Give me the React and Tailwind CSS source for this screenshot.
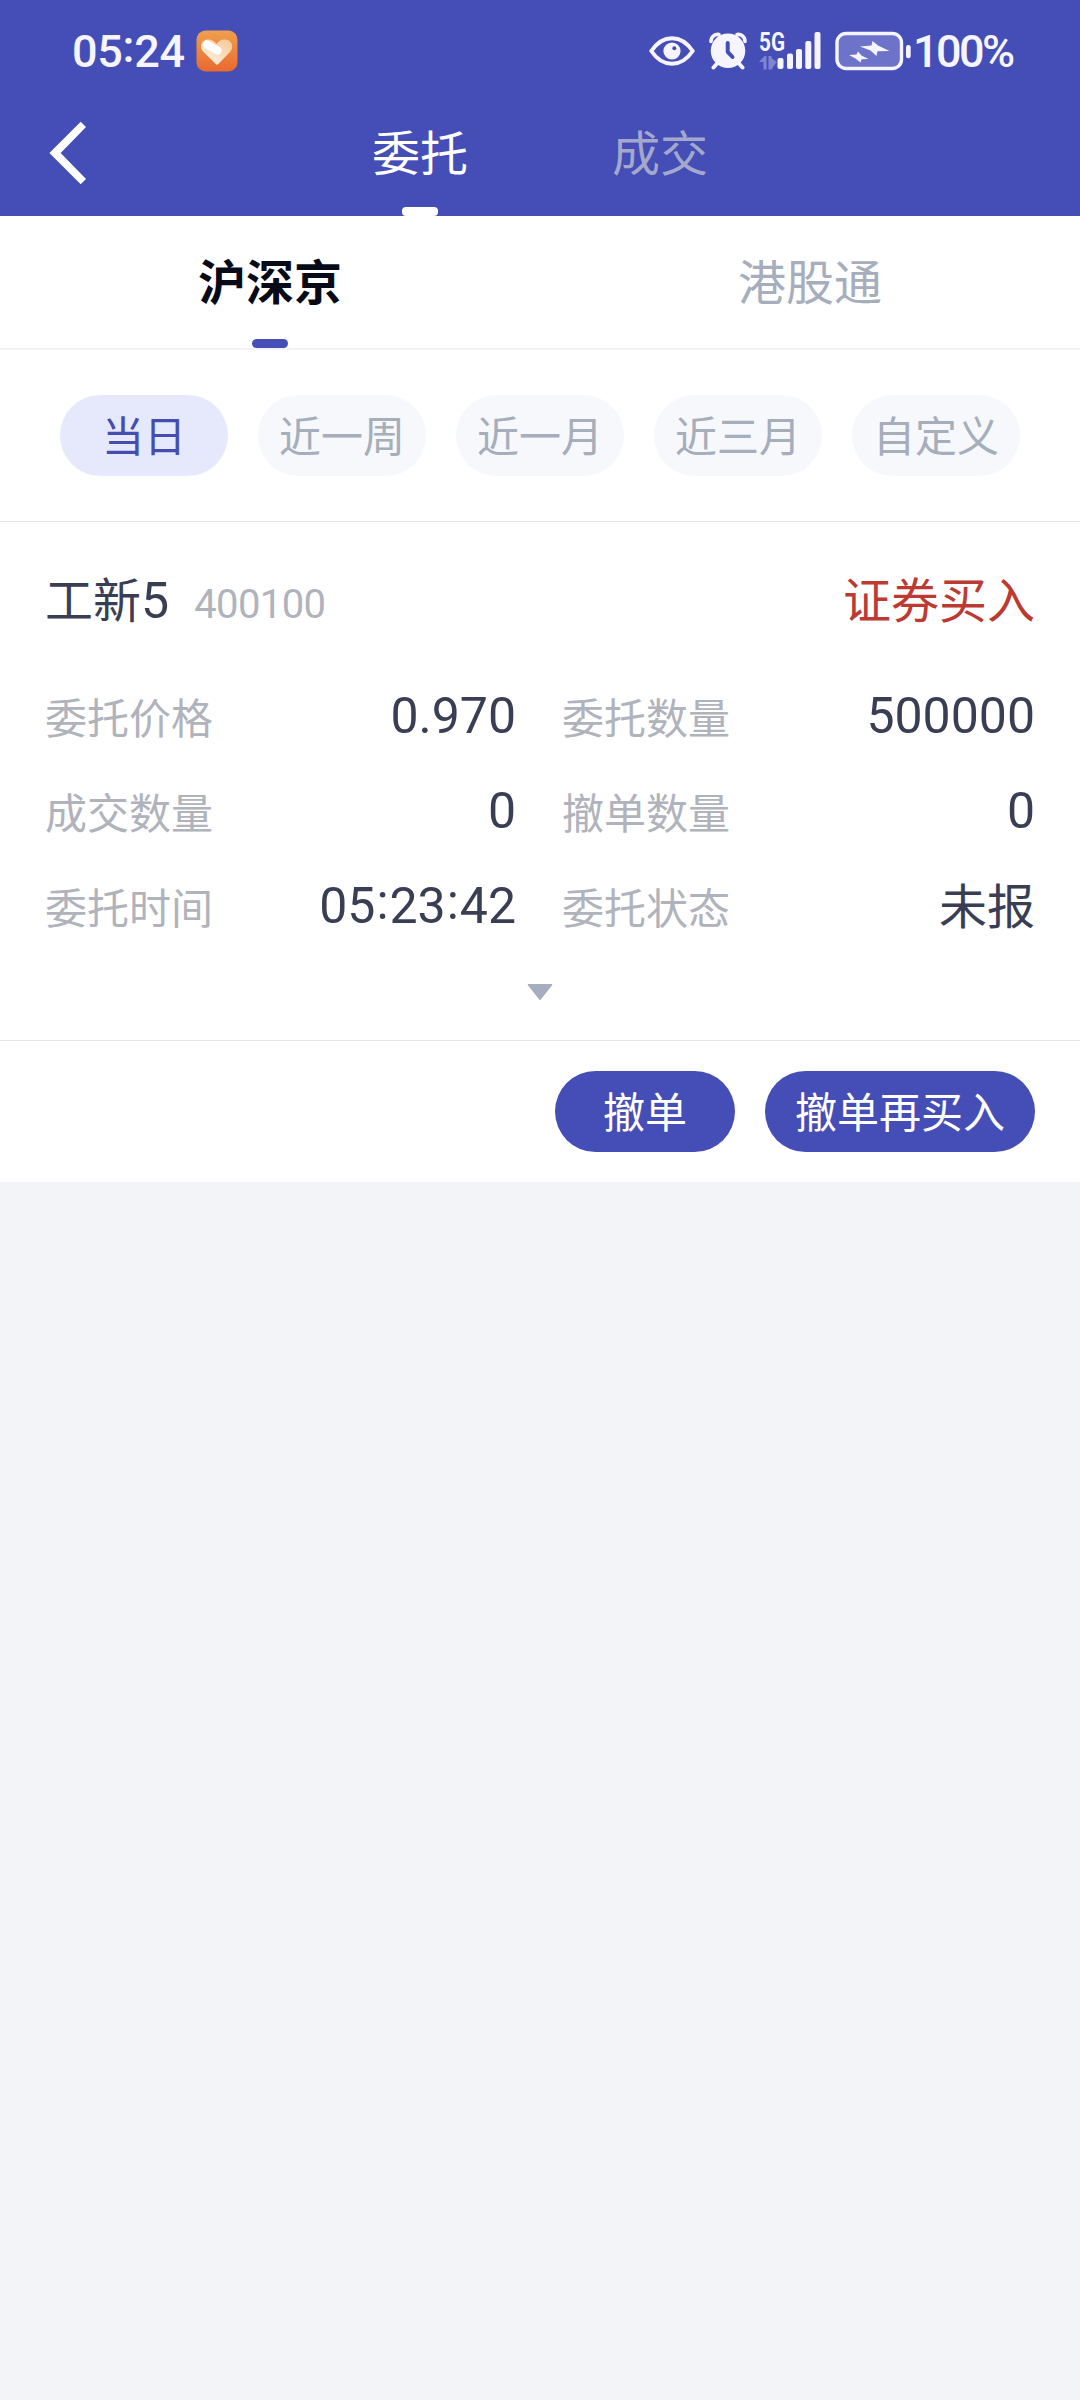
import React, { useState } from 'react';

const headerTabs = ['委托', '成交'];
const markets = ['沪深京', '港股通'];
const ranges = ['当日', '近一周', '近一月', '近三月', '自定义'];

const order = {
  name: '工新',
  suffix: '5',
  code: '400100',
  side: '证券买入',
  fields: [
    { label: '委托价格', value: '0.970' },
    { label: '委托数量', value: '500000' },
    { label: '成交数量', value: '0' },
    { label: '撤单数量', value: '0' },
    { label: '委托时间', value: '05:23:42' },
    { label: '委托状态', value: '未报', isText: true },
  ],
};

// Colons sit a bit higher than the font's default so they are centred on the digits
const Digits = ({ value, colonClass = '' }) =>
  value.split(/(:)/).map((part, i) =>
    part === ':' ? (
      <span key={i} className={`relative -top-[0.09em] ${colonClass}`}>:</span>
    ) : (
      <span key={i}>{part}</span>
    )
  );

const HeartIcon = () => (
  <svg width="42" height="42" viewBox="0 0 42 42">
    <defs>
      <linearGradient id="app" x1="0" y1="0" x2="0" y2="1">
        <stop offset="0" stopColor="#f0a04f" />
        <stop offset="1" stopColor="#e8692e" />
      </linearGradient>
      <linearGradient id="heart" x1="0" y1="1" x2="1" y2="0">
        <stop offset="0" stopColor="#fff5ec" />
        <stop offset="1" stopColor="#f6c793" />
      </linearGradient>
    </defs>
    <rect x="0.5" y="0.5" width="41" height="41" rx="9" fill="url(#app)" />
    <path d="M20.3 34.5 L7.5 22 C3 17 5 9.500 12 9.500 C16 9.500 18.500 11.300 20.500 14 C22.500 11.300 25 9.500 28.500 9.500 C36 9.500 38.500 17 34 22 L22.300 34 Q21.300 35 20.300 34.500Z" fill="url(#heart)" />
    <path d="M11 14.500 L21.500 20.500" stroke="#fff" strokeWidth="8" strokeLinecap="round" />
  </svg>
);

const EyeIcon = () => (
  <svg width="46" height="30" viewBox="0 0 46 30" fill="none">
    <path d="M2.3 15 C8 6.500 15 2.200 23 2.200 C31 2.200 38 6.500 43.700 15 C38 23.500 31 27.800 23 27.800 C15 27.800 8 23.500 2.300 15Z" stroke="#f6f5ff" strokeWidth="4" strokeLinejoin="round" />
    <circle cx="23" cy="15" r="8.600" fill="#f6f5ff" />
    <circle cx="25.300" cy="12.300" r="2" fill="#454db7" />
  </svg>
);

const AlarmIcon = () => (
  <svg width="38" height="38" viewBox="0 0 38 38" fill="none">
    <g stroke="#f6f5ff" strokeLinecap="round">
      <path d="M2 9.500 C2 4.500 6 1.800 10 2.500" strokeWidth="3.600" />
      <path d="M36 9.500 C36 4.500 32 1.800 28 2.500" strokeWidth="3.600" />
      <path d="M8.500 31 L4.500 35.500 M29.500 31 L33.500 35.500" strokeWidth="4" />
    </g>
    <circle cx="19" cy="18.800" r="17.300" fill="#f6f5ff" />
    <path d="M18.700 11 V19.800 L23.500 25" stroke="#454db7" strokeWidth="4" strokeLinecap="round" strokeLinejoin="round" />
  </svg>
);

const SignalIcon = () => (
  <svg className="overflow-visible" width="64" height="50" viewBox="0 -5 64 50">
    <text x="0" y="19.500" fontFamily="Roboto, sans-serif" fontWeight="700" fontSize="25" textLength="26" lengthAdjust="spacingAndGlyphs" fill="#f6f5ff">5G</text>
    <path d="M0 31 L5.500 25 H7.500 V38.500 H4.500 V31Z" fill="#8085d3" />
    <path d="M9.500 25 H12.500 V27 L17.500 31 L12.500 38.500 H9.500Z" fill="#8085d3" />
    <g fill="#f6f5ff">
      <rect x="18.500" y="27" width="6" height="11" rx="2" />
      <rect x="28" y="22.500" width="6" height="15.500" rx="2" />
      <rect x="37" y="18" width="6" height="20" rx="2" />
      <rect x="46.300" y="10" width="6" height="28" rx="2" />
      <rect x="55.500" y="1" width="6" height="37" rx="2" />
    </g>
  </svg>
);

const BatteryIcon = () => (
  <svg width="76" height="40" viewBox="0 0 76 40">
    <rect x="2" y="2.500" width="64.500" height="35" rx="9" fill="#6d73c8" stroke="#f6f5ff" strokeWidth="3.400" />
    <rect x="71" y="14" width="4.700" height="13.300" rx="2.300" fill="#f6f5ff" />
    <path d="M25 15.500 L36.500 14.500 L37.500 10 L43 14.500 L54.500 20 L42.500 20.300 L41.500 25 L35.500 19.500Z" fill="#f6f5ff" />
    <path d="M14 24 L21.500 23.500 L23 20.500 L26.500 24.500 L33.500 28 L26.500 28.300 L25.500 31.500 L20.500 27.500Z" fill="#f6f5ff" />
  </svg>
);

const StatusBar = () => (
  <div className="flex h-[102px] items-center pl-[72px] pr-[65px] text-[#f6f5ff]">
    <span className="font-['Roboto',sans-serif] text-[45px] leading-none font-medium tracking-[-0.3px]">
      <Digits value="05:24" />
    </span>
    <span className="ml-[11px]"><HeartIcon /></span>
    <div className="ml-auto flex items-center">
      <EyeIcon />
      <span className="ml-[14px]"><AlarmIcon /></span>
      <span className="ml-3"><SignalIcon /></span>
      <span className="ml-3"><BatteryIcon /></span>
      <span className="ml-0.5 w-[102px] font-['Roboto',sans-serif] text-[45px] leading-none font-medium tracking-[-2.6px] whitespace-nowrap">
        100%
      </span>
    </div>
  </div>
);

const App = () => {
  const [headerTab, setHeaderTab] = useState(0);
  const [market, setMarket] = useState(0);
  const [range, setRange] = useState(0);

  return (
    <div className="min-h-[2400px] w-[1080px] bg-[#f3f4f7] font-['Noto_Sans_CJK_SC',sans-serif]">
      <header className="h-[216px] bg-[#454db7]">
        <StatusBar />
        <div className="grid h-[114px] grid-cols-[300px_480px_300px]">
          <button className="flex items-start pt-[19px] pl-[49px]">
            <svg width="38" height="64" viewBox="0 0 38 64">
              <path d="M31.700 0.700 L37 6 L11.700 32 L37 58 L31.700 63.300 L0.400 32Z" fill="#fff" />
            </svg>
          </button>
          <div className="flex">
            {headerTabs.map((tab, i) => (
              <button
                key={tab}
                onClick={() => setHeaderTab(i)}
                className={`flex flex-1 flex-col items-center justify-between pt-[18px] text-[48px] leading-[60px] ${i === headerTab ? 'text-white' : 'text-[#a3a8cc]'}`}
              >
                {tab}
                {i === headerTab && <span className="h-[9px] w-9 rounded-[4px] bg-white" />}
              </button>
            ))}
          </div>
        </div>
      </header>

      <nav className="flex h-[134px] border-b-2 border-[#f3f3f5] bg-white">
        {markets.map((item, i) => (
          <button
            key={item}
            onClick={() => setMarket(i)}
            className={`flex flex-1 flex-col items-center justify-between pt-[33px] text-[48px] leading-[60px] ${i === market ? 'font-bold text-[#080a18]' : 'text-[#a6adbd]'}`}
          >
            {item}
            {i === market && <span className="h-[9px] w-9 rounded-full bg-[#454db7]" />}
          </button>
        ))}
      </nav>

      <div className="flex h-[172px] gap-[30px] border-b border-[#e4e4e6] bg-white px-[60px] pt-[45px]">
        {ranges.map((item, i) => (
          <button
            key={item}
            onClick={() => setRange(i)}
            className={`flex h-[81px] w-[168px] justify-center rounded-full text-[42px] leading-[78px] ${i === range ? 'bg-[#e6e9fc] text-[#454db0]' : 'bg-[#f6f8fc] text-[#a6adbb]'}`}
          >
            {item}
          </button>
        ))}
      </div>

      <section className="bg-white">
        <div className="flex h-[519px] flex-col border-b border-[#e4e4e6] px-[45px] pt-[45px]">
          <div className="flex h-[62px] items-baseline text-[48px] leading-[60px] text-[#3a3e54]">
            <span>{order.name}</span>
            <span className="font-['Roboto',sans-serif] text-[50px]">{order.suffix}</span>
            <span className="ml-[25px] font-['Roboto',sans-serif] text-[40px] tracking-[-0.6px] text-[#b0b3bc]">{order.code}</span>
            <span className="ml-auto text-[#bd3a32]">{order.side}</span>
          </div>
          <div className="mt-[46px] grid grid-cols-[471px_473px] gap-x-[46px]">
            {order.fields.map(({ label, value, isText }) => (
              <div key={label} className="flex h-[95px] items-start justify-between pt-[11px]">
                <span className="text-[42px] leading-[60px] text-[#b0b3bc]">{label}</span>
                {isText ? (
                  <span className="-mt-[3px] text-[48px] leading-[60px] text-[#3a3e54]">{value}</span>
                ) : (
                  <span className="font-['Roboto',sans-serif] text-[50px] leading-[60px] text-[#3a3e54]">
                    <Digits value={value} colonClass="px-px" />
                  </span>
                )}
              </div>
            ))}
          </div>
          <svg className="mt-[23px] self-center" width="26" height="18" viewBox="0 0 27 18">
            <path d="M1.500 1.500 H25.500 L13.500 16.500Z" fill="#a6adbd" stroke="#a6adbd" strokeWidth="1.500" strokeLinejoin="round" />
          </svg>
        </div>
        <div className="flex h-[141px] items-center justify-end gap-[30px] px-[45px] text-[42px] leading-[78px] text-white">
          <button className="flex h-[81px] w-[180px] justify-center rounded-full bg-[#454db7]">撤单</button>
          <button className="flex h-[81px] w-[270px] justify-center rounded-full bg-[#454db7]">撤单再买入</button>
        </div>
      </section>
    </div>
  );
};

export default App;
